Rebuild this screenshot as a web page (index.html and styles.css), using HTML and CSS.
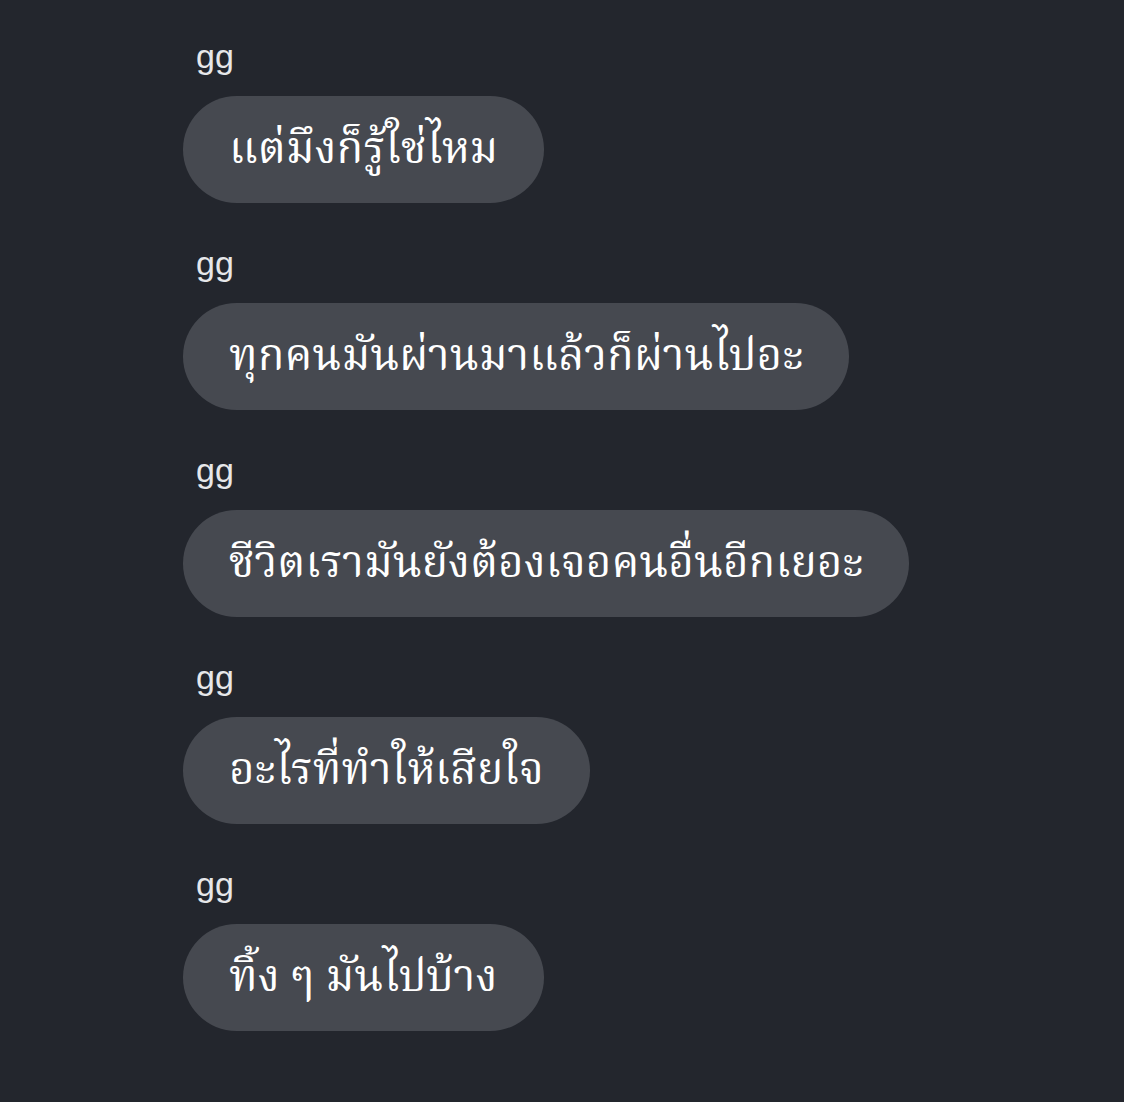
FILE: index.html
```html
<!DOCTYPE html>
<html lang="th">
<head>
<meta charset="utf-8">
<link rel="stylesheet" href="styles.css">
</head>
<body>
<div class="chat">
  <div class="msg">
    <div class="name">gg</div>
    <div class="bubble">แต่มึงก็รู้ใช่ไหม</div>
  </div>
  <div class="msg">
    <div class="name">gg</div>
    <div class="bubble">ทุกคนมันผ่านมาแล้วก็ผ่านไปอะ</div>
  </div>
  <div class="msg">
    <div class="name">gg</div>
    <div class="bubble">ชีวิตเรามันยังต้องเจอคนอื่นอีกเยอะ</div>
  </div>
  <div class="msg">
    <div class="name">gg</div>
    <div class="bubble">อะไรที่ทำให้เสียใจ</div>
  </div>
  <div class="msg">
    <div class="name">gg</div>
    <div class="bubble">ทิ้ง ๆ มันไปบ้าง</div>
  </div>
</div>
</body>
</html>
```

FILE: styles.css
```css
html, body {
  margin: 0;
  padding: 0;
  background: #23262d;
}
body {
  width: 1124px;
  height: 1102px;
  overflow: hidden;
}
.chat {
  display: flex;
  flex-direction: column;
  align-items: flex-start;
  padding: 36px 0 0 183px;
  gap: 40px;
}
.msg {
  display: flex;
  flex-direction: column;
  align-items: flex-start;
}
.name {
  font-family: "Liberation Sans", Arial, sans-serif;
  font-size: 34px;
  line-height: 40px;
  height: 40px;
  color: #e6e7e9;
  padding-left: 13px;
}
.bubble {
  margin-top: 20px;
  height: 107px;
  box-sizing: border-box;
  padding: 2px 46px 0;
  display: flex;
  align-items: center;
  background: #464950;
  border-radius: 54px;
  color: #ffffff;
  font-family: "Noto Serif Thai", "Noto Sans Thai", serif;
  font-size: 44px;
  line-height: 60px;
  white-space: nowrap;
}
```
